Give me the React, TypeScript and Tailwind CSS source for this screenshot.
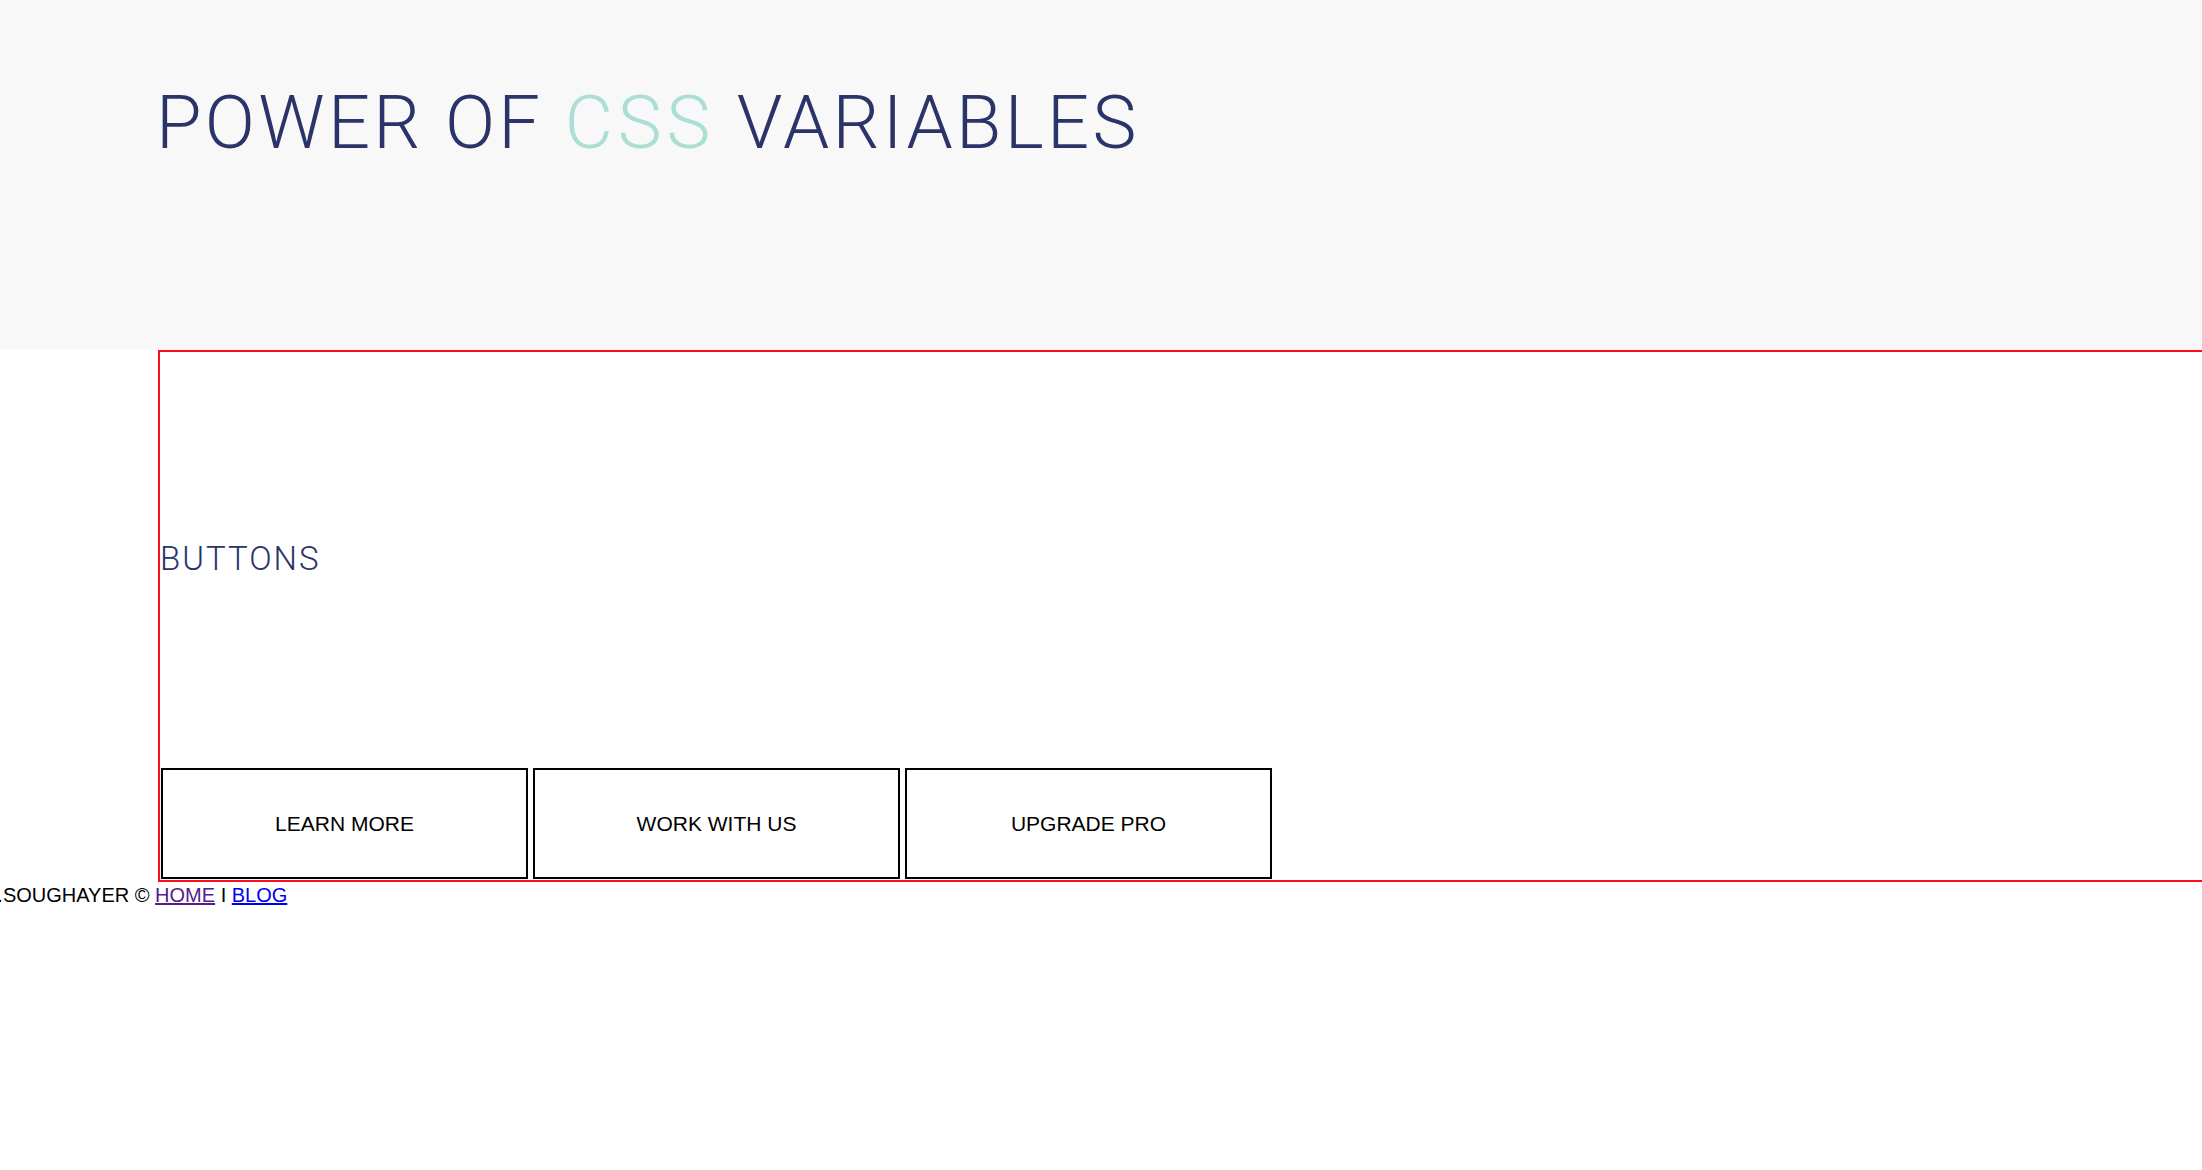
export default function App() {
  return (
    <div className="min-h-[1170px] w-full overflow-hidden bg-white">
      <header className="h-[350px] bg-[#f8f8f8] pl-[156px] pt-[86px]">
        <h1
          className="m-0 text-[74px] leading-none font-light text-[#2a3468] whitespace-nowrap tracking-[3.3px]"
          style={{ fontFamily: 'Roboto, "Liberation Sans", sans-serif' }}
        >
          POWER OF <span className="text-[#abded5] tracking-[5px]">CSS</span> VARIABLES
        </h1>
      </header>
      <section className="ml-[158px] border-t-2 border-l-2 border-b-2 border-[#ff0a1e] flex flex-col">
        <h2
          className="mt-[190px] text-[33px] leading-none font-light text-[#2a3468] tracking-[2px]"
          style={{ fontFamily: 'Roboto, "Liberation Sans", sans-serif' }}
        >
          BUTTONS
        </h2>
        <div
          className="mt-[193px] mb-[1px] ml-[1px] flex gap-[5px]"
          style={{ fontFamily: '"Liberation Sans", Arial, sans-serif' }}
        >
          {["LEARN MORE", "WORK WITH US", "UPGRADE PRO"].map((t) => (
            <button
              key={t}
              className="w-[367px] h-[111px] border-2 border-black bg-white text-[21px] text-black flex items-center justify-center"
            >
              {t}
            </button>
          ))}
        </div>
      </section>
      <footer
        className="-mt-[2px] -ml-4 text-[20px] text-black whitespace-nowrap"
        style={{ fontFamily: '"Liberation Sans", Arial, sans-serif' }}
      >
        A.SOUGHAYER ©{" "}
        <a href="#" className="underline text-[#551a8b]">
          HOME
        </a>{" "}
        I{" "}
        <a href="#" className="underline text-[#0000ee]">
          BLOG
        </a>
      </footer>
    </div>
  );
}
